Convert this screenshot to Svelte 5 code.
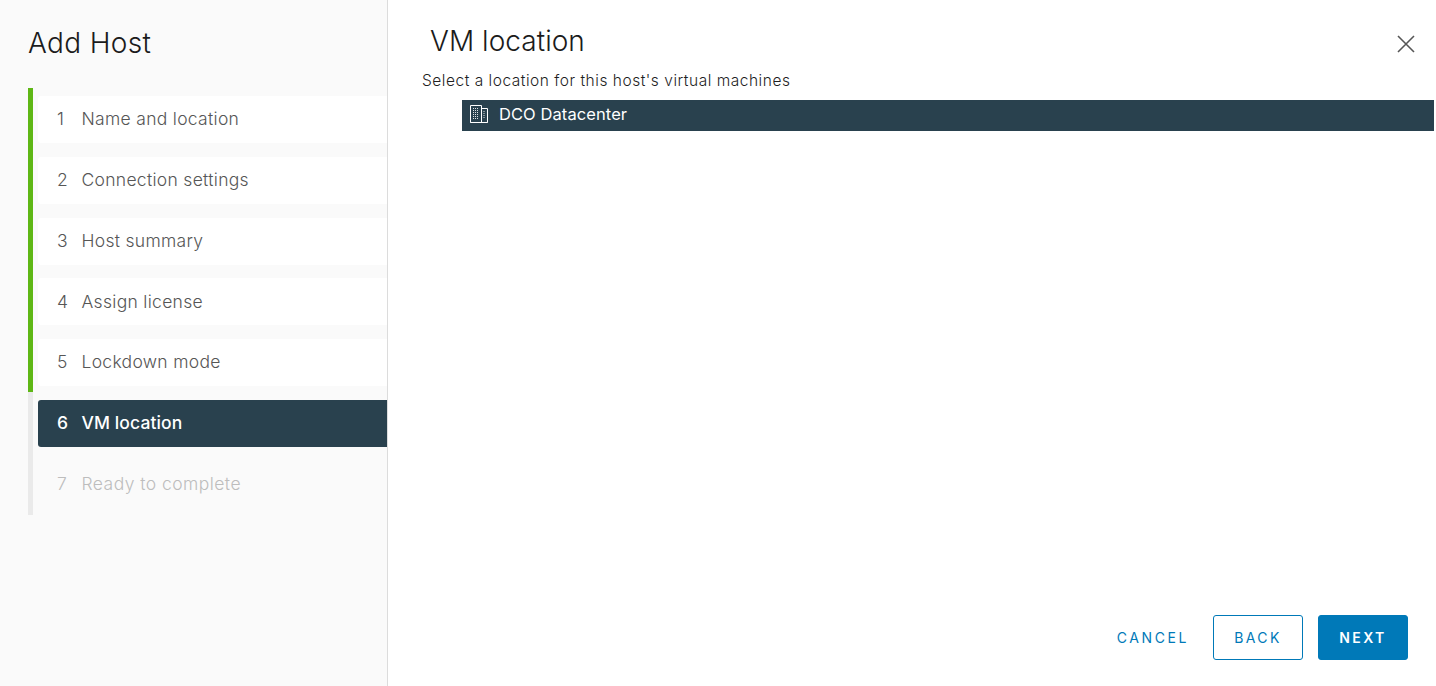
<script>
  const steps = [
    { n: 1, label: 'Name and location', state: 'done' },
    { n: 2, label: 'Connection settings', state: 'done' },
    { n: 3, label: 'Host summary', state: 'done' },
    { n: 4, label: 'Assign license', state: 'done' },
    { n: 5, label: 'Lockdown mode', state: 'done' },
    { n: 6, label: 'VM location', state: 'active' },
    { n: 7, label: 'Ready to complete', state: 'todo' }
  ];
</script>

<div class="modal">
  <aside class="side">
    <h2 class="side-title">Add Host</h2>
    <div class="track">
      <div class="track-done"></div>
      <ol class="steps">
        {#each steps as s}
          <li class="step {s.state}">
            <span class="num">{s.n}</span>
            <span class="label">{s.label}</span>
          </li>
        {/each}
      </ol>
    </div>
  </aside>

  <main class="content">
    <header class="head">
      <h3 class="title">VM location</h3>
      <button class="close" aria-label="Close">
        <svg width="20" height="20" viewBox="0 0 20 20"><path d="M2 2 L18 18 M18 2 L2 18" stroke="#565656" stroke-width="1.6" fill="none"/></svg>
      </button>
    </header>
    <p class="sub">Select a location for this host's virtual machines</p>
    <div class="tree">
      <div class="row">
        <svg class="dc" width="18" height="18" viewBox="0 0 18 18" fill="none" stroke="#fff" stroke-width="1">
          <path d="M0.5 17.5V0.5H11.5V17.5ZM11.5 3.5H17.5V17.5H11.5M0.5 17.5H17.5"/>
          <path d="M3 3.5h6M3 5.5h6M3 7.5h6M3 9.5h6M3 11.5h6M3 13.5h6M13.5 6.5h2M13.5 8.5h2M13.5 10.5h2M13.5 12.5h2" stroke-dasharray="1 1" stroke-opacity="0.85"/>
        </svg>
        <span>DCO Datacenter</span>
      </div>
    </div>
    <footer class="foot">
      <button class="btn link">CANCEL</button>
      <button class="btn outline">BACK</button>
      <button class="btn solid">NEXT</button>
    </footer>
  </main>
</div>

<style>
  :global(body) { margin: 0; background: #fff; }
  .modal {
    display: flex;
    width: 1436px;
    height: 686px;
    overflow: hidden;
    font-family: "Inter", "Liberation Sans", sans-serif;
  }
  .side {
    box-sizing: border-box;
    width: 388px;
    flex: none;
    background: #fafafa;
    border-right: 1px solid #dcdcdc;
    padding: 23px 0 0 28px;
  }
  .side-title {
    margin: 0 0 25px 0;
    height: 40px;
    font-size: 28px;
    line-height: 40px;
    font-weight: 300;
    letter-spacing: 0.35px;
    color: #1b1b1b;
  }
  .track {
    position: relative;
    display: flex;
    height: 427px;
    background: linear-gradient(#eaeaea, #eaeaea) no-repeat left top / 5px 100%;
  }
  .track-done {
    position: absolute;
    left: 0;
    top: 0;
    width: 5px;
    height: 304px;
    background: #5eb715;
  }
  .steps {
    list-style: none;
    margin: 8px 0 0 10px;
    padding: 0;
    flex: 1;
    display: flex;
    flex-direction: column;
    gap: 13.8px;
  }
  .step {
    box-sizing: border-box;
    display: flex;
    align-items: center;
    height: 47px;
    padding: 0 0 1.6px 19px;
    border-radius: 3px 0 0 3px;
    font-size: 17.5px;
    font-weight: 300;
    letter-spacing: 0.3px;
    color: #565656;
    background: #fff;
  }
  .step.active {
    background: #29414e;
    color: #fff;
    font-weight: 500;
    letter-spacing: 0.1px;
  }
  .step.todo {
    background: transparent;
    color: #bdbdbd;
    letter-spacing: 0.45px;
  }
  .num { width: 24.5px; flex: none; }
  .content {
    flex: 1;
    min-width: 0;
    display: flex;
    flex-direction: column;
    padding: 0 2px 26px 34px;
  }
  .head {
    display: flex;
    justify-content: space-between;
    align-items: flex-start;
    height: 60px;
    padding-left: 9px;
    padding-top: 21px;
    box-sizing: border-box;
  }
  .title {
    margin: 0;
    font-size: 28px;
    line-height: 40px;
    font-weight: 300;
    letter-spacing: 0.05px;
    margin-left: -1px;
    color: #1b1b1b;
  }
  .close {
    margin: 13px 18px 0 0;
    padding: 0;
    width: 20px;
    height: 20px;
    border: 0;
    background: none;
    display: block;
  }
  .sub {
    margin: 11px 0 0;
    height: 20px;
    font-size: 15.5px;
    line-height: 20px;
    font-weight: 300;
    letter-spacing: 0.52px;
    color: #1f1f1f;
  }
  .tree { flex: 1; margin-top: 9px; padding-left: 40px; }
  .row {
    box-sizing: border-box;
    display: flex;
    align-items: center;
    height: 31px;
    padding: 0 0 3px 8px;
    gap: 11px;
    background: #29414e;
    color: #fff;
    font-size: 16.5px;
    font-weight: 400;
    letter-spacing: 0.08px;
  }
  .dc { flex: none; }
  .foot {
    display: flex;
    justify-content: flex-end;
    align-items: center;
    gap: 15px;
    padding-right: 26px;
  }
  .btn {
    box-sizing: border-box;
    width: 90px;
    height: 45px;
    border-radius: 3px;
    font-family: inherit;
    font-size: 14px;
    letter-spacing: 2.4px;
    padding: 0;
  }
  .link {
    width: auto;
    margin-right: 9px;
    background: none;
    border: 0;
    color: #0079b8;
    font-weight: 400;
    letter-spacing: 2.6px;
  }
  .outline {
    background: #fff;
    border: 1px solid #0079b8;
    color: #0079b8;
    font-weight: 400;
  }
  .solid {
    background: #0079b8;
    border: 1px solid #0079b8;
    color: #fff;
    font-weight: 600;
  }
</style>
